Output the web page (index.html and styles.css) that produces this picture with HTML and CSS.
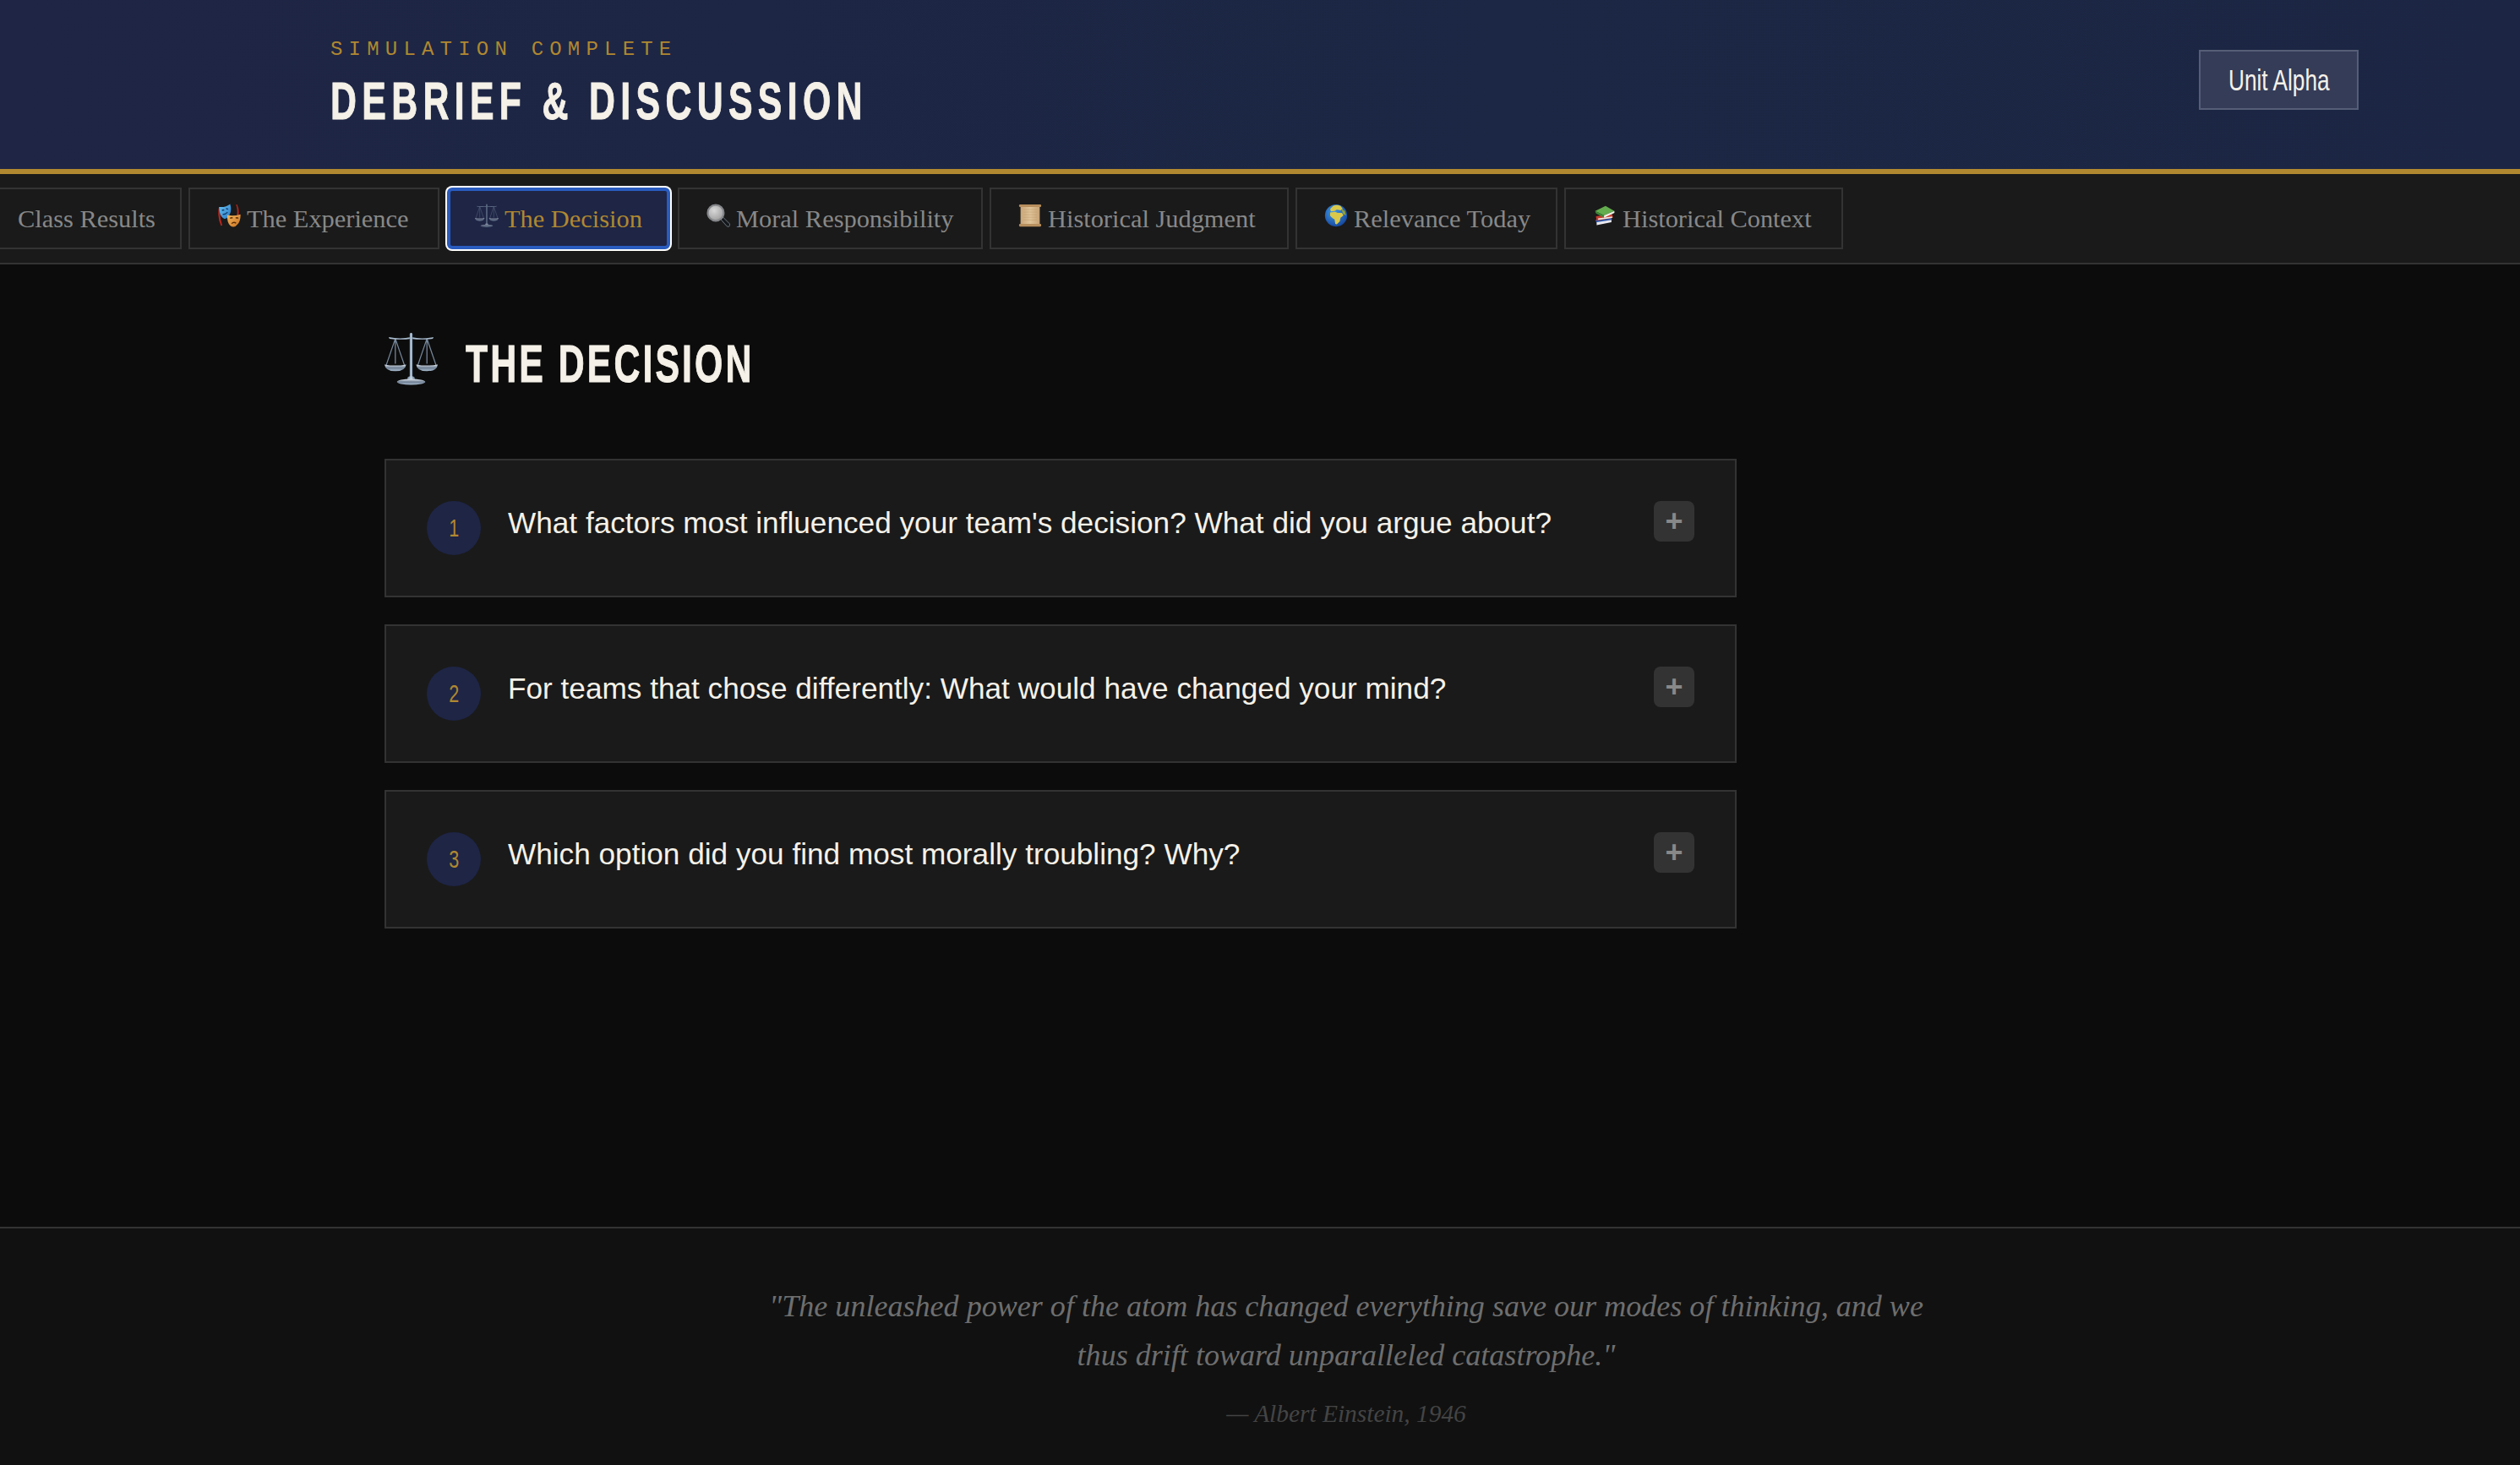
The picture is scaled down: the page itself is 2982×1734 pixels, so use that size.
FILE: index.html
```html
<!DOCTYPE html>
<html lang="en">
<head>
<meta charset="utf-8">
<title>Debrief &amp; Discussion</title>
<link rel="stylesheet" href="styles.css">
</head>
<body>
<svg class="defs" aria-hidden="true">
  <defs>
    <linearGradient id="pan" x1="0" y1="0" x2="0" y2="1"><stop offset="0" stop-color="#dfe6ee"/><stop offset=".5" stop-color="#6f7f93"/><stop offset="1" stop-color="#a9bccf"/></linearGradient>
    <linearGradient id="post" x1="0" y1="0" x2="1" y2="0"><stop offset="0" stop-color="#5f7690"/><stop offset=".5" stop-color="#c7d6e4"/><stop offset="1" stop-color="#52677f"/></linearGradient>
    <linearGradient id="mblue" x1="0" y1="0" x2="1" y2="1"><stop offset="0" stop-color="#6cc4f2"/><stop offset="1" stop-color="#2676c2"/></linearGradient>
    <linearGradient id="morange" x1="0" y1="0" x2="1" y2="1"><stop offset="0" stop-color="#f4bb62"/><stop offset="1" stop-color="#c96f1d"/></linearGradient>
    <radialGradient id="lens" cx=".4" cy=".35" r=".7"><stop offset="0" stop-color="#d8d8d8"/><stop offset="1" stop-color="#9c9c9c"/></radialGradient>
    <linearGradient id="paper" x1="0" y1="0" x2="1" y2="0"><stop offset="0" stop-color="#c9a678"/><stop offset=".5" stop-color="#e0c49a"/><stop offset="1" stop-color="#c6a274"/></linearGradient>
    <radialGradient id="ocean" cx=".4" cy=".35" r=".75"><stop offset="0" stop-color="#3f9be8"/><stop offset="1" stop-color="#123f96"/></radialGradient>
    <symbol id="i-scales" viewBox="0 0 64 64">
      <g fill="none" stroke="#76879b" stroke-width="1.3">
        <path d="M13 8 2 40M13 8l11 32M51 8 40 40M51 8l11 32M13 8v30M51 8v30"/>
      </g>
      <path d="M5 6q14 3 27 0q13 3 27 0l-1 2q-13 2-26 0q-13 2-26 0z" fill="#a9bccf"/>
      <rect x="30.2" y="1" width="3.6" height="54" rx="1.6" fill="url(#post)"/>
      <path d="M0 39q13 2.500 26 0q-1 8-13 8T0 39zM38 39q13 2.500 26 0q-1 8-13 8T38 39z" fill="url(#pan)"/>
      <path d="M28 54q4-2 8 0l1 4h-10z" fill="url(#post)"/>
      <ellipse cx="32" cy="60" rx="17" ry="3.600" fill="url(#pan)"/>
    </symbol>
  </defs>
</svg>

<header class="hero">
  <div class="hero-copy">
    <p class="eyebrow">SIMULATION COMPLETE</p>
    <h1 class="hero-title"><span class="squeeze squeeze-hero">DEBRIEF &amp; DISCUSSION</span></h1>
  </div>
  <div class="unit-badge"><span class="squeeze-unit">Unit Alpha</span></div>
</header>

<nav class="tabs">
  <div class="tab-strip">
    <button class="tab tab-class">Class Results</button>
    <button class="tab tab-exp">
      <svg class="tab-icon" viewBox="0 0 64 64" aria-hidden="true">
        <path d="M4 12Q0 36 10 60l4-1Q6 36 9 13zM54 2q8 18 2 36l-4-1q5-18-1-34z" fill="#b3261e"/>
        <path d="M5 9q18 2 30-8q5 16-1 28q-6 12-15 12Q6 36 5 9z" fill="url(#mblue)"/>
        <path d="M13 19q3-3 6-1M24 14q3-1 5 2M15 29q7 1 13-6" fill="none" stroke="#123c6e" stroke-width="3"/>
        <path d="M27 31q17 4 36-2q1 18-8 27q-6 8-12 7q-10-2-14-14q-2-8-2-18z" fill="url(#morange)"/>
        <path d="M35 40q3-3 7-1M50 39q4-2 7 1M39 54q6-6 12-1" fill="none" stroke="#5b2c06" stroke-width="3"/>
      </svg>
      <span>The Experience</span>
    </button>
    <button class="tab tab-dec is-active">
      <svg class="tab-icon tab-icon-dim" aria-hidden="true"><use href="#i-scales"/></svg>
      <span>The Decision</span>
    </button>
    <button class="tab tab-moral">
      <svg class="tab-icon" viewBox="0 0 64 64" aria-hidden="true">
        <path d="M39 43l6-6 17 17q3 4 0 7t-7 0z" fill="#14181c" stroke="#7a858f" stroke-width="2"/>
        <circle cx="25" cy="25" r="21.500" fill="url(#lens)" stroke="#85878a" stroke-width="5"/>
      </svg>
      <span>Moral Responsibility</span>
    </button>
    <button class="tab tab-jud">
      <svg class="tab-icon" viewBox="0 0 64 64" aria-hidden="true">
        <rect x="6" y="6" width="52" height="52" fill="url(#paper)"/>
        <path d="M14 16h36M14 23h36M14 30h36M14 37h36M14 44h36" stroke="#b99767" stroke-width="1"/>
        <rect x="2" y="2" width="60" height="7" rx="3" fill="#b78f5e"/>
        <rect x="2" y="55" width="60" height="7" rx="3" fill="#b78f5e"/>
      </svg>
      <span>Historical Judgment</span>
    </button>
    <button class="tab tab-rel">
      <svg class="tab-icon" viewBox="0 0 64 64" aria-hidden="true">
        <circle cx="32" cy="32" r="30" fill="url(#ocean)"/>
        <path d="M24 6q10-4 20 0l6 8-6 4-10-2-6 4-10 1-2-7zM16 24l14-2 6 3 12 0 4 7-8 6-2 10-8 8-4-1-2-12-6-4-6-6z" fill="#d9c84a"/>
        <path d="M46 14l10 6 3 12-8-4z" fill="#8fa03a"/>
      </svg>
      <span>Relevance Today</span>
    </button>
    <button class="tab tab-ctx">
      <svg class="tab-icon" viewBox="0 0 64 64" aria-hidden="true">
        <path d="M6 44l42-8 4 8-42 8z" fill="#2b56a8"/>
        <path d="M10 50l40-6v6l-40 8z" fill="#e8e8ee"/>
        <path d="M8 34l44-6 2 10-44 8z" fill="#c93a2c"/>
        <path d="M14 40l38-5v4l-38 5z" fill="#efe6e0"/>
        <path d="M6 20 34 6l24 14-28 12z" fill="#63ad4e"/>
        <path d="M6 20l24 12v6L8 26z" fill="#3f8a37"/>
        <path d="M30 32l28-12v5L30 38z" fill="#f1f1ea"/>
      </svg>
      <span>Historical Context</span>
    </button>
  </div>
</nav>

<main class="content">
  <h2 class="section-head">
    <svg class="section-icon" aria-hidden="true"><use href="#i-scales"/></svg>
    <span class="squeeze squeeze-section">THE DECISION</span>
  </h2>
  <div class="cards">
    <article class="card">
      <div class="num"><span class="squeeze-num">1</span></div>
      <p class="question">What factors most influenced your team's decision? What did you argue about?</p>
      <div class="plus">+</div>
    </article>
    <article class="card">
      <div class="num"><span class="squeeze-num">2</span></div>
      <p class="question">For teams that chose differently: What would have changed your mind?</p>
      <div class="plus">+</div>
    </article>
    <article class="card">
      <div class="num"><span class="squeeze-num">3</span></div>
      <p class="question">Which option did you find most morally troubling? Why?</p>
      <div class="plus">+</div>
    </article>
  </div>
</main>

<footer class="foot">
  <div class="foot-inner">
    <p class="quote">"The unleashed power of the atom has changed everything save our modes of thinking, and we thus drift toward unparalleled catastrophe."</p>
    <p class="attr">— Albert Einstein, 1946</p>
  </div>
</footer>
</body>
</html>
```
FILE: styles.css
```css
* { box-sizing: border-box; }
html, body { margin: 0; padding: 0; }
body {
  width: 2982px;
  height: 1734px;
  overflow: hidden;
  display: flex;
  flex-direction: column;
  background: #0c0c0c;
  color: #f5f1e8;
  font-family: "Liberation Sans", Arial, sans-serif;
}
.defs { position: absolute; width: 0; height: 0; }

/* condensed display type: no narrow face is installed, so squeeze the sans */
.squeeze {
  display: inline-block;
  white-space: nowrap;
  transform: scaleX(.68);
  transform-origin: left center;
  -webkit-text-stroke: 1px currentColor;
}
.squeeze-hero { letter-spacing: 9.3px; }
.squeeze-section { letter-spacing: 4.5px; }
.squeeze-unit { display: inline-block; white-space: nowrap; transform: scaleX(.75); }
.squeeze-num { display: inline-block; transform: scaleX(.72); }

/* header */
.hero {
  height: 206px;
  flex: none;
  display: flex;
  justify-content: space-between;
  align-items: flex-start;
  padding: 0 191px 0 391px;
  background: linear-gradient(90deg, #1f2545 0%, #1b2744 60%, #1c2644 100%);
  border-bottom: 6px solid #b08830;
}
.eyebrow {
  margin: 45px 0 0;
  font: 400 24px/28px "Liberation Mono", monospace;
  letter-spacing: 7.2px;
  color: #b08830;
}
.hero-title {
  margin: 11px 0 0;
  font: 700 63px/70px "Liberation Sans", sans-serif;
  color: #f5f1e8;
}
.unit-badge {
  margin-top: 59px;
  width: 189px;
  height: 71px;
  display: flex;
  align-items: center;
  justify-content: center;
  background: #353c58;
  border: 2px solid #565e77;
  font: 400 35px/1 "Liberation Sans", sans-serif;
  color: #f5f1e8;
}

/* tabs */
.tabs {
  height: 107px;
  flex: none;
  overflow: hidden;
  background: #1a1a1a;
  border-bottom: 2px solid #333;
  padding-top: 16px;
}
.tab-strip { display: flex; gap: 8px; margin-left: -13px; }
.tab {
  flex: none;
  height: 73px;
  display: flex;
  align-items: center;
  gap: 7px;
  padding: 2px 32px 0;
  background: #1a1a1a;
  border: 2px solid #333;
  font: 400 30.4px/1 "Liberation Serif", serif;
  white-space: nowrap;
  color: #888;
}
.tab-class { width: 228px; }
.tab-exp { width: 297px; }
.tab-dec { width: 264px; margin: 0 1px; }
.tab-moral { width: 361px; }
.tab-jud { width: 354px; }
.tab-rel { width: 310px; }
.tab-ctx { width: 330px; }
.tab-icon { flex: none; width: 28px; height: 28px; margin-top: -10px; }
.tab-icon-dim { opacity: .62; }
.is-active {
  background: #1e2545;
  color: #b08830;
  border: 4px solid #2a5cc0;
  border-radius: 6px;
  padding: 2px 29px 0;
  box-shadow: 0 0 0 2px #fff;
}

/* main */
.content { flex: 1; padding: 73px 0 0 455px; background: #0c0c0c; }
.section-head {
  display: flex;
  align-items: center;
  gap: 33px;
  margin: 0 0 69px;
  height: 88px;
  font: 700 63px/88px "Liberation Sans", sans-serif;
  color: #f5f1e8;
}
.section-icon { width: 63px; height: 63px; flex: none; margin-top: -12px; }
.cards { width: 1600px; display: flex; flex-direction: column; gap: 32px; }
.card {
  height: 164px;
  display: flex;
  align-items: flex-start;
  gap: 32px;
  padding: 48px;
  background: #1a1a1a;
  border: 2px solid #333;
}
.num {
  flex: none;
  width: 64px;
  height: 64px;
  border-radius: 50%;
  display: flex;
  align-items: center;
  justify-content: center;
  background: #1e2545;
  color: #b08830;
  font: 400 30px/1 "Liberation Sans", sans-serif;
}
.question {
  flex: 1;
  margin: 0;
  font: 400 35.2px/52.8px "Liberation Sans", Arial, sans-serif;
  color: #f5f1e8;
}
.plus {
  flex: none;
  width: 48px;
  height: 48px;
  border-radius: 8px;
  display: flex;
  align-items: center;
  justify-content: center;
  background: #333;
  color: #888;
  font: 700 36px/1 "Liberation Sans", sans-serif;
}

/* footer */
.foot {
  height: 282px;
  flex: none;
  background: #111;
  border-top: 2px solid #333;
  padding: 64px 0 0 893px;
}
.foot-inner { width: 1400px; text-align: center; }
.quote {
  margin: 0;
  font: italic 400 36.1px/57.6px "Liberation Serif", serif;
  color: #6e6e6e;
}
.attr {
  margin: 19px 0 0;
  font: italic 400 29.4px/42px "Liberation Serif", serif;
  color: #444;
}
```
